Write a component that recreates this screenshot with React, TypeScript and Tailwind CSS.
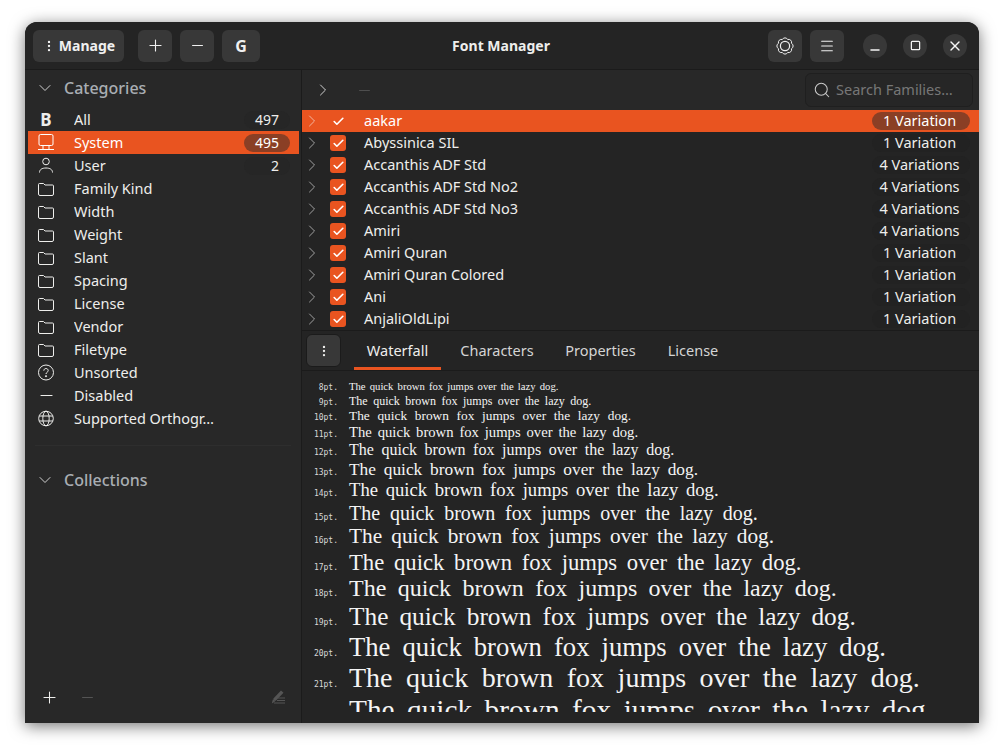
import React from "react";
import { ChevronDown, ChevronRight, Check, Minus, Plus, Search, X, Menu, Square, EllipsisVertical } from "lucide-react";

const FolderIcon = () => (
  <svg width="16" height="17" viewBox="0 0 16 17" fill="none" stroke="currentColor" strokeWidth="1">
    <path d="M.5 4.500a1 1 0 0 1 1-1h4l1.500 1.500h7.500a1 1 0 0 1 1 1v8a1.500 1.500 0 0 1-1.500 1.500H2a1.500 1.500 0 0 1-1.500-1.500z" />
  </svg>
);

const MonitorIcon = () => (
  <svg width="16" height="17" viewBox="0 0 16 17" fill="none" stroke="currentColor" strokeWidth="1">
    <rect x="1" y="0.5" width="14" height="11" rx="1.500" />
    <path d="M5 12v3M11 12v3M0 15.500h16" />
  </svg>
);

const UserIcon = () => (
  <svg width="16" height="17" viewBox="0 0 16 17" fill="none" stroke="currentColor" strokeWidth="1">
    <circle cx="8" cy="4.500" r="3.300" />
    <path d="M1.500 15.500c0-3 2.500-4.500 6.500-4.500s6.500 1.500 6.500 4.500" />
  </svg>
);

const QuestionIcon = () => (
  <svg width="16" height="17" viewBox="0 0 16 17" fill="none" stroke="currentColor" strokeWidth="1">
    <circle cx="8" cy="8.500" r="7.500" />
    <path d="M5.800 6.700c0-1.300 1-2.200 2.200-2.200s2.200.9 2.200 2.100c0 1.700-2.200 1.700-2.200 3.400" />
    <circle cx="8" cy="12.200" r=".6" fill="currentColor" />
  </svg>
);

const GlobeIcon = () => (
  <svg width="16" height="17" viewBox="0 0 16 17" fill="none" stroke="currentColor" strokeWidth="1">
    <circle cx="8" cy="8.500" r="7.300" />
    <ellipse cx="8" cy="8.500" rx="3.200" ry="7.300" />
    <path d="M1.200 6h13.600M1.200 11h13.600" />
  </svg>
);

const GearIcon = () => (
  <svg width="18" height="18" viewBox="0 0 18 18" fill="none" stroke="currentColor">
    <circle cx="9" cy="9" r="4.600" strokeWidth="1.200" />
    <path
      strokeWidth="1"
      d="M15.470 6.320A3 3 0 0 1 15.470 11.680A3 3 0 0 1 11.680 15.470A3 3 0 0 1 6.320 15.470A3 3 0 0 1 2.530 11.680A3 3 0 0 1 2.530 6.320A3 3 0 0 1 6.320 2.530A3 3 0 0 1 11.680 2.530A3 3 0 0 1 15.470 6.320z"
    />
  </svg>
);

const EditIcon = () => (
  <svg width="16" height="16" viewBox="0 0 16 16" fill="currentColor">
    <path d="M11 1.500l2.500 2.300-7.700 8H3.400v-2.300zM2.800 10.500l2.300 2-3.300 2z" />
    <path d="M8 8.500h7v1H8zM7 11h8v1H7zM4 13.500h11v1H4z" />
  </svg>
);

const categories = [
  { label: "All", icon: <span className="text-[17px] font-bold leading-none">B</span>, count: "497" },
  { label: "System", icon: <MonitorIcon />, count: "495", selected: true },
  { label: "User", icon: <UserIcon />, count: "2" },
  { label: "Family Kind", icon: <FolderIcon /> },
  { label: "Width", icon: <FolderIcon /> },
  { label: "Weight", icon: <FolderIcon /> },
  { label: "Slant", icon: <FolderIcon /> },
  { label: "Spacing", icon: <FolderIcon /> },
  { label: "License", icon: <FolderIcon /> },
  { label: "Vendor", icon: <FolderIcon /> },
  { label: "Filetype", icon: <FolderIcon /> },
  { label: "Unsorted", icon: <QuestionIcon /> },
  { label: "Disabled", icon: <Minus size={19} strokeWidth={1.3} /> },
  { label: "Supported Orthogr…", icon: <GlobeIcon /> },
];

const families = [
  { name: "aakar", variations: "1 Variation", selected: true },
  { name: "Abyssinica SIL", variations: "1 Variation" },
  { name: "Accanthis ADF Std", variations: "4 Variations" },
  { name: "Accanthis ADF Std No2", variations: "4 Variations" },
  { name: "Accanthis ADF Std No3", variations: "4 Variations" },
  { name: "Amiri", variations: "4 Variations" },
  { name: "Amiri Quran", variations: "1 Variation" },
  { name: "Amiri Quran Colored", variations: "1 Variation" },
  { name: "Ani", variations: "1 Variation" },
  { name: "AnjaliOldLipi", variations: "1 Variation" },
];

const waterfall = [
  { pt: "8pt.", cls: "h-[13px] text-[10.67px] [word-spacing:1.5px]" },
  { pt: "9pt.", cls: "h-[15px] text-[12px] [word-spacing:2.5px]" },
  { pt: "10pt.", cls: "h-[15px] text-[13.33px] [word-spacing:4.4px]" },
  { pt: "11pt.", cls: "h-[18px] text-[14.67px] [word-spacing:2.2px]" },
  { pt: "12pt.", cls: "h-[18px] text-[16px] [word-spacing:3.6px]" },
  { pt: "13pt.", cls: "h-[20px] text-[17.33px] [word-spacing:3.5px]" },
  { pt: "14pt.", cls: "h-[22px] text-[18.67px] [word-spacing:3px]" },
  { pt: "15pt.", cls: "h-[23px] text-[20px] [word-spacing:4.8px]" },
  { pt: "16pt.", cls: "h-[24px] text-[21.33px] [word-spacing:3.75px]" },
  { pt: "17pt.", cls: "h-[28px] text-[22.67px] [word-spacing:4.1px]" },
  { pt: "18pt.", cls: "h-[25px] text-[24px] [word-spacing:5.4px]" },
  { pt: "19pt.", cls: "h-[29px] text-[25.33px] [word-spacing:4.7px]" },
  { pt: "20pt.", cls: "h-[32px] text-[26.67px] [word-spacing:5.4px]" },
  { pt: "21pt.", cls: "h-[31px] text-[28px] [word-spacing:6.5px]" },
  { pt: "22pt.", cls: "h-[33px] text-[29.33px] [word-spacing:5.1px]" },
];

const tabs = [
  { label: "Waterfall", cls: "w-[87px] border-b-[3px] border-[#e95420] pt-[3px] text-[#eeeeec]" },
  { label: "Characters", cls: "w-[96px] text-[#d4d4d4]" },
  { label: "Properties", cls: "w-[95px] text-[#d4d4d4]" },
  { label: "License", cls: "w-[74px] text-[#d4d4d4]" },
];

const HeaderButton = ({ className, children }: { className: string; children: React.ReactNode }) => (
  <button className={`flex h-[32px] items-center justify-center rounded-[6px] bg-[#383838] text-[#f0f0f0] ${className}`}>
    {children}
  </button>
);

const WindowButton = ({ children }: { children: React.ReactNode }) => (
  <button className="flex h-[24px] w-[24px] items-center justify-center rounded-full bg-[#383838] text-[#f4f4f4]">
    {children}
  </button>
);

export default function App() {
  return (
    <div className="h-[751px] w-[1004px] overflow-hidden bg-white pl-[25px] pt-[22px] font-['Noto_Sans',sans-serif] text-[14.5px] text-[#eeeeec]">
      <div className="flex h-[701px] w-[954px] flex-col overflow-hidden rounded-t-[12px] bg-[#282828] shadow-[0_3px_16px_rgba(0,0,0,0.55)]">
        {/* header bar */}
        <div className="flex h-[48px] flex-none items-center border-b border-[#1b1b1b] bg-[#242424] px-[8px]">
          <div className="flex flex-1 items-center">
            <HeaderButton className="w-[91px] gap-[3px] text-[14px] font-bold">
              <EllipsisVertical size={14} />
              Manage
            </HeaderButton>
            <HeaderButton className="ml-[14px] w-[34px]">
              <Plus size={19} strokeWidth={1.4} />
            </HeaderButton>
            <HeaderButton className="ml-[8px] w-[34px]">
              <Minus size={17} strokeWidth={1.5} />
            </HeaderButton>
            <HeaderButton className="ml-[8px] w-[38px] text-[16px] font-bold">G</HeaderButton>
          </div>
          <div className="pl-[2px] text-center text-[14px] font-bold">Font Manager</div>
          <div className="flex flex-1 items-center justify-end pr-[4px]">
            <HeaderButton className="w-[34px]">
              <GearIcon />
            </HeaderButton>
            <HeaderButton className="ml-[8px] w-[34px]">
              <Menu size={16} strokeWidth={1.6} />
            </HeaderButton>
            <div className="ml-[19px] flex gap-[16px]">
              <WindowButton>
                <Minus size={14} strokeWidth={2.2} className="translate-y-[4px]" />
              </WindowButton>
              <WindowButton>
                <Square size={11} strokeWidth={2.7} />
              </WindowButton>
              <WindowButton>
                <X size={16} strokeWidth={2} />
              </WindowButton>
            </div>
          </div>
        </div>

        <div className="flex min-h-0 flex-1">
          {/* sidebar */}
          <div className="flex w-[277px] flex-none flex-col border-r border-[#1b1b1b] bg-[#282828]">
            <div className="flex h-[38px] flex-none items-center pb-[3px] pl-[10px] text-[16px] font-medium text-[#a9aeb3]">
              <ChevronDown size={20} strokeWidth={1.2} className="text-[#d0d0d0]" />
              <span className="ml-[9px]">Categories</span>
            </div>
            <div className="flex flex-col pl-[3px] pr-[2px]">
              {categories.map((c) => (
                <div
                  key={c.label}
                  className={`flex h-[23px] items-center ${c.selected ? "bg-[#e95420] text-white" : ""}`}
                >
                  <div className="flex w-[36px] justify-center">{c.icon}</div>
                  <span className="ml-[10px] flex-1 truncate">{c.label}</span>
                  {c.count && (
                    <span
                      className={`mr-[9px] flex h-[18px] w-[46px] items-center rounded-full pb-[1px] text-[14px] ${
                        c.selected ? "bg-[#8a3f25]" : "bg-[#262626]"
                      } ${c.count === "2" ? "justify-end pr-[11px]" : "justify-center"}`}
                    >
                      {c.count}
                    </span>
                  )}
                </div>
              ))}
            </div>
            <div className="mx-[10px] mt-[15px] border-t border-[#2e2e2e]" />
            <div className="mt-[22px] flex h-[24px] flex-none items-center pl-[10px] text-[16px] font-medium text-[#a9aeb3]">
              <ChevronDown size={20} strokeWidth={1.2} className="text-[#d0d0d0]" />
              <span className="ml-[9px]">Collections</span>
            </div>
            <div className="mt-auto flex h-[50px] items-center pb-[2px] pl-[15px] pr-[15px]">
              <Plus size={19} strokeWidth={1.3} />
              <Minus size={17} strokeWidth={1.4} className="ml-[20px] text-[#555555]" />
              <div className="ml-auto text-[#555555]">
                <EditIcon />
              </div>
            </div>
          </div>

          {/* main */}
          <div className="flex min-w-0 flex-1 flex-col bg-[#242424] pb-[2px]">
            <div className="flex h-[40px] flex-none items-center bg-[#282828] pl-[11px] pr-[6px]">
              <ChevronRight size={20} strokeWidth={1.2} className="text-[#d0d0d0]" />
              <Minus size={17} strokeWidth={1.2} className="ml-[23px] text-[#555555]" />
              <div className="ml-auto flex h-[34px] w-[168px] items-center rounded-[6px] border border-[#1f1f1f] bg-[#262626] pl-[7px] text-[#777777]">
                <Search size={18} strokeWidth={1.4} className="text-[#c8c8c8]" />
                <span className="ml-[5px]">Search Families…</span>
              </div>
            </div>

            <div className="flex flex-col">
              {families.map((f) => (
                <div
                  key={f.name}
                  className={`flex h-[22px] items-center ${f.selected ? "bg-[#e95420] text-white" : ""}`}
                >
                  <ChevronRight
                    size={20}
                    strokeWidth={1.2}
                    className={f.selected ? "text-[#f3b59f]" : "text-[#a0a0a0]"}
                  />
                  <div
                    className={`ml-[8px] flex h-[16px] w-[16px] items-center justify-center rounded-[3px] ${
                      f.selected ? "" : "bg-[#e95420]"
                    }`}
                  >
                    <Check size={13} strokeWidth={3} className="text-white" />
                  </div>
                  <span className="ml-[18px] flex-1">{f.name}</span>
                  <span
                    className={`mr-[9px] flex h-[18px] w-[98px] items-center justify-center rounded-full pb-[1px] pr-[3px] ${
                      f.selected ? "bg-[#8a3f25]" : "bg-[#222222]"
                    }`}
                  >
                    {f.variations}
                  </span>
                </div>
              ))}
            </div>

            <div className="flex h-[41px] flex-none items-center border-y border-[#1b1b1b] pl-[4px]">
              <button className="flex h-[33px] w-[35px] items-center justify-center rounded-[6px] border border-[#1b1b1b] bg-[#383838]">
                <EllipsisVertical size={14} />
              </button>
              <div className="ml-[13px] flex h-full gap-[8px]">
                {tabs.map((t) => (
                  <div key={t.label} className={`flex items-center justify-center ${t.cls}`}>
                    {t.label}
                  </div>
                ))}
              </div>
            </div>

            <div className="min-h-0 flex-1 pb-[9px]">
              <div className="h-full overflow-hidden pt-[8px]">
                {waterfall.map((w) => (
                  <div key={w.pt} className={`flex flex-col justify-end whitespace-nowrap ${w.cls}`}>
                    <div className="flex items-baseline leading-none">
                      <span className="w-[36px] flex-none text-right font-['DejaVu_Sans_Mono',monospace] text-[8px] text-[#d8d8d8] [word-spacing:0]">
                        {w.pt}
                      </span>
                      <span className="ml-[11px] font-['Liberation_Serif',serif] text-[#f4f4f4]">
                        The quick brown fox jumps over the lazy dog.
                      </span>
                    </div>
                  </div>
                ))}
              </div>
            </div>
          </div>
        </div>
      </div>
    </div>
  );
}
